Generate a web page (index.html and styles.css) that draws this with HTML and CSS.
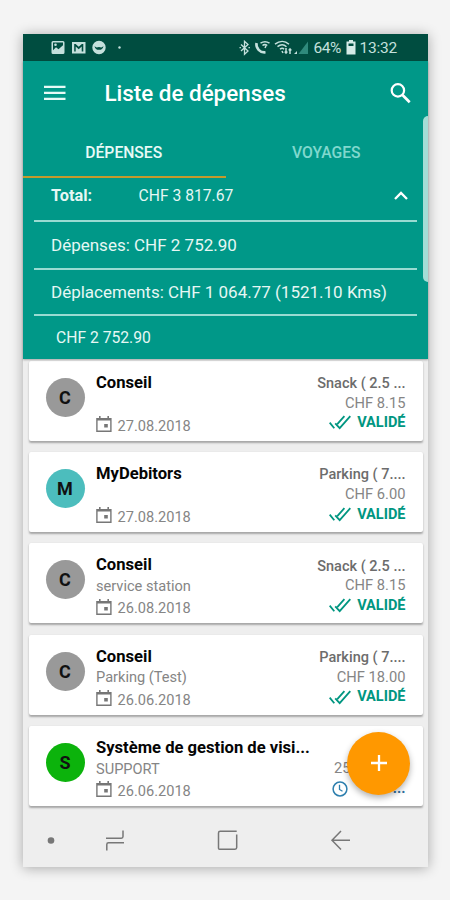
FILE: index.html
```
<!DOCTYPE html>
<html lang="fr">
<head>
<meta charset="utf-8">
<title>Liste de dépenses</title>
<link rel="stylesheet" href="styles.css">
</head>
<body>
<svg class="defs" width="0" height="0" aria-hidden="true">
  <symbol id="cal" viewBox="0 0 16 17"><path fill="none" stroke="currentColor" stroke-width="1.4" d="M.9 2.7h14v12.6H.9z"/><path fill="currentColor" d="M1 2.2h14v2.200H1zM3 0h1.6v3H3zM11.4 0H13v3h-1.600zM8.200 8h3.600v3.600H8.200z"/></symbol>
  <symbol id="checks" viewBox="0 0 22 15"><path fill="none" stroke="currentColor" stroke-width="1.8" d="M.7 7.600l4.600 5.600M6.200 8.300l4.500 4.900L21.300 1.200M8.300 9.200L15.400 1.200"/></symbol>
</svg>
<main class="phone">
  <div class="status">
    <svg class="st-left" width="75" height="16" viewBox="0 0 75 16" fill="#c4e0dc">
      <path fill-rule="evenodd" d="M2 1h10a1.500 1.500 0 0 1 1.500 1.500v10a1.500 1.500 0 0 1-1.500 1.500H2a1.500 1.500 0 0 1-1.500-1.500v-10A1.500 1.500 0 0 1 2 1zm0 1.600v7.600l3-3 2.500 2 4.500-4V2.600z"/><circle cx="4.500" cy="4.800" r="1.300"/>
      <path fill-rule="evenodd" d="M21 2h13.500v11.500H21zM23.200 4v7.500h1.500V6.500l3 2.800 3-2.800v5h1.600V4h-1.400l-3.200 2.700L24.600 4z"/>
      <path fill-rule="evenodd" d="M48 .8a6.700 6.700 0 1 1 0 13.400A6.700 6.700 0 0 1 48 .8zM43.500 6.200a4.600 4.600 0 0 0 9 0l-2.200 1.400-2.300-.6-2.300.6z"/>
      <circle cx="68.500" cy="7.500" r="1.200"/>
    </svg>
    <svg class="st-right" width="74" height="16" viewBox="0 0 74 16" fill="none" stroke="#c4e0dc" stroke-width="1.300">
      <path d="M3 4.500l7 6.500-3.500 3.200V1.300L10 4.500 3 11M1.500 7.700h1.400M10.500 7.700h1.400"/>
      <path stroke-width="2.600" d="M18.500 3c-.8 5 3.500 10 9 9.300"/><path stroke-width="1.500" d="M22.500 3.200c3-2 6-2 9 0M24.500 5.500c1.500-1.200 3-1.200 4.800 0M27 8l1-2"/>
      <path stroke-width="1.500" d="M37 4.200c4.500-3.600 10-3.600 14 0M39.500 6.700c3-2.400 6.300-2.400 9 0M42 9.200c1.500-1.200 3-1.200 4 0M44 11l1 2M48 8v5M46.800 11.500L48 13l1.300-1.500M52 14V9M50.800 10.500L52 9l1.300 1.500"/>
      <path fill="#2f8a7c" stroke="none" d="M70 1.500V14H60.500z"/><path fill="#c4e0dc" stroke="none" d="M59 11v3h-3z"/>
    </svg>
    <span class="st-text pct">64%</span>
    <svg class="batt" width="10" height="15" viewBox="0 0 10 15"><path fill="#d5ebe7" fill-rule="evenodd" d="M3 0h4v1.500h2.500V14.500H.5V1.500H3zM2.500 3.500v2.500h5V3.500z"/></svg>
    <span class="st-text clock">13:32</span>
  </div>
  <header class="head">
    <div class="bar">
      <svg class="menu" width="22" height="16" viewBox="0 0 22 16"><path stroke="#e6faf6" stroke-width="2.300" d="M0 1.800h21.500M0 7.800h21.500M0 13.800h21.500"/></svg>
      <h1 class="title">Liste de dépenses</h1>
      <svg class="search" width="21" height="21" viewBox="0 0 21 21" fill="none" stroke="#fff"><circle cx="7.900" cy="7.400" r="6.200" stroke-width="2.200"/><path stroke-width="2.700" d="M12.500 12l7.200 7.200"/></svg>
    </div>
    <nav class="tabs"><span class="tab on">DÉPENSES</span><span class="tab">VOYAGES</span></nav>
    <div class="row total"><b class="t-label">Total:</b><span class="t-val">CHF 3 817.67</span>
      <svg class="chev" width="14" height="9" viewBox="0 0 14 9"><path fill="none" stroke="#fff" stroke-width="2.300" d="M1 8l6-6 6 6"/></svg></div>
    <div class="row dep"><span class="r-dep">Dépenses: CHF 2 752.90</span></div>
    <div class="row km"><span class="r-km">Déplacements: CHF 1 064.77 (1521.10 Kms)</span></div>
    <div class="row sum"><span class="r-sum">CHF 2 752.90</span></div>
    <div class="edge"></div>
  </header>
  <section class="list">
    <article class="card"><div class="avatar">C</div>
      <div class="info"><div class="name">Conseil</div><div class="sub"></div><div class="date"><svg width="16" height="17"><use href="#cal"/></svg><span>27.08.2018</span></div></div>
      <div class="side"><div class="kind snack">Snack ( 2.5 ...</div><div class="amt">CHF 8.15</div><div class="ok"><svg width="22" height="15"><use href="#checks"/></svg><span>VALIDÉ</span></div></div></article>
    <article class="card"><div class="avatar teal">M</div>
      <div class="info"><div class="name">MyDebitors</div><div class="sub"></div><div class="date"><svg width="16" height="17"><use href="#cal"/></svg><span>27.08.2018</span></div></div>
      <div class="side"><div class="kind park">Parking ( 7....</div><div class="amt">CHF 6.00</div><div class="ok"><svg width="22" height="15"><use href="#checks"/></svg><span>VALIDÉ</span></div></div></article>
    <article class="card"><div class="avatar">C</div>
      <div class="info"><div class="name">Conseil</div><div class="sub">service station</div><div class="date"><svg width="16" height="17"><use href="#cal"/></svg><span>26.08.2018</span></div></div>
      <div class="side"><div class="kind snack">Snack ( 2.5 ...</div><div class="amt">CHF 8.15</div><div class="ok"><svg width="22" height="15"><use href="#checks"/></svg><span>VALIDÉ</span></div></div></article>
    <article class="card"><div class="avatar">C</div>
      <div class="info"><div class="name">Conseil</div><div class="sub">Parking (Test)</div><div class="date"><svg width="16" height="17"><use href="#cal"/></svg><span>26.06.2018</span></div></div>
      <div class="side"><div class="kind park">Parking ( 7....</div><div class="amt">CHF 18.00</div><div class="ok"><svg width="22" height="15"><use href="#checks"/></svg><span>VALIDÉ</span></div></div></article>
    <article class="card"><div class="avatar green">S</div>
      <div class="info"><div class="name">Système de gestion de visi...</div><div class="sub">SUPPORT</div><div class="date"><svg width="16" height="17"><use href="#cal"/></svg><span>26.06.2018</span></div></div>
      <div class="side last"><div class="kind"></div><div class="amt km-amt">25</div><div class="wait"><svg width="16" height="16" viewBox="0 0 16 16" fill="none" stroke="#2d7fae"><circle cx="8" cy="8" r="6.900" stroke-width="1.500"/><path stroke-width="1.300" d="M7.500 3.800v4.700l3 1.800"/></svg><span>...</span></div></div></article>
    <div class="fab"><svg width="16" height="16" viewBox="0 0 16 16"><path stroke="#fff" stroke-width="2.300" d="M8 0v16M0 8h16"/></svg></div>
  </section>
  <footer class="nav">
    <svg width="405" height="60" viewBox="0 0 405 60" fill="none" stroke="#777" stroke-width="1.500">
      <circle cx="28" cy="33.500" r="3.300" fill="#777" stroke="none"/>
      <path d="M83 31.200h15.300q1.700 0 1.700-1.700V23.500M101 35.700H85.500q-1.700 0-1.700 1.700V43.500"/>
      <path d="M213.700 27.500v13q0 1.700-1.700 1.700h-15.500q-1 0-1-1V26q0-1.700 1.700-1.700h16.500"/>
      <path d="M327 33.200h-17M318 24l-9 9.200 9 9.300"/>
    </svg>
  </footer>
</main>
</body>
</html>
```
FILE: styles.css
```
* { box-sizing: border-box; }
body { margin: 0; width: 450px; height: 900px; overflow: hidden; background: #f4f4f4; font-family: Roboto, "Liberation Sans", sans-serif; padding: 34px 0 0 23px; }
.defs { position: absolute; }
svg { display: block; flex: none; }
span, .name, .sub, .kind, .amt, .title { white-space: nowrap; }
.phone { width: 405px; height: 833px; background: #eee; display: flex; flex-direction: column; box-shadow: 0 1px 12px rgba(0,0,0,.32); }
.status { height: 27px; flex: none; background: #004d40; display: flex; align-items: center; padding-left: 28px; }
.st-right { margin-left: 112px; }
.st-text { color: #c4e0dc; font-size: 15.500px; line-height: 20px; padding-top: 1px; }
.pct { width: 28px; margin-left: 1.500px; letter-spacing: -.4px; }
.batt { margin-left: 4px; }
.clock { margin-left: 4px; letter-spacing: -.2px; }
.head { height: 298px; flex: none; background: #009888; color: #fff; position: relative; z-index: 1; box-shadow: 0 1px 2px rgba(0,0,0,.3); }
.bar { height: 64px; display: flex; align-items: center; padding: 0 17px 0 21px; }
.title { margin: 0 auto 0 38.500px; font-size: 22.400px; font-weight: 500; }
.tabs { height: 53px; display: flex; }
.tab { width: 50%; text-align: center; line-height: 55px; font-size: 15.700px; font-weight: 500; color: #80d8ce; padding-right: 1px; }
.tab.on { color: #e8faf7; border-bottom: 2px solid #c49a2c; }
.row { margin: 0 11px; padding-left: 17px; display: flex; align-items: center; font-size: 17px; color: #e6f7f4; border-bottom: 2px solid #99dbd2; }
.total { height: 44px; font-size: 15.700px; padding-bottom: 8px; }
.t-label { width: 87.500px; font-weight: 700; font-size: 16.300px; }
.chev { margin: 0 9px 0 auto; }
.dep { height: 47.500px; padding-top: 1px; }
.km { height: 46px; }
.sum { height: 44px; border: 0; padding-left: 22px; font-size: 15.700px; }
.edge { position: absolute; right: 0; top: 55px; width: 5px; height: 166px; background: #a4ddd6; border-radius: 5px 0 0 5px; }
.list { height: 448px; flex: none; position: relative; padding: 1.500px 5.500px 0; display: flex; flex-direction: column; gap: 11.400px; }
.card { height: 80px; flex: none; background: #fff; border-radius: 2px; display: flex; padding: 0 17px; box-shadow: 0 1.500px 2px rgba(0,0,0,.3); }
.avatar { width: 39px; height: 39px; margin-top: 17px; border-radius: 50%; background: #999; display: grid; place-items: center; font-size: 18px; font-weight: 700; color: #111; }
.teal { background: #4cbdbd; }
.green { background: #0cb30c; }
.info { margin-left: 11.500px; padding-top: 11px; flex: 1; width: 0; color: #858585; font-size: 14.600px; line-height: 21.500px; }
.name { color: #050505; font-size: 16.600px; font-weight: 700; }
.sub { height: 21.500px; font-size: 14.600px; }
.date { display: flex; align-items: center; gap: 5.500px; color: #777; padding-top: 1px; }
.date svg { margin-top: -4px; }
.date span { color: #858585; }
.side { padding-top: 13.500px; text-align: right; font-size: 14.700px; line-height: 19.600px; color: #858585; }
.kind { font-size: 14.500px; font-weight: 500; color: #6c6c6c; height: 19.600px; }
.ok { display: flex; justify-content: flex-end; align-items: center; gap: 6.500px; color: #009681; font-weight: 700; font-size: 14.500px; }
.last { width: 73.500px; }
.km-amt { text-align: left; padding-left: 2px; }
.wait { display: flex; justify-content: space-between; align-items: center; color: #2d6f9e; font-weight: 700; }
.fab { position: absolute; left: 324px; top: 372.500px; width: 63px; height: 63px; border-radius: 50%; background: #ff9800; display: grid; place-items: center; box-shadow: 0 3px 6px rgba(0,0,0,.3); }
.nav { height: 60px; flex: none; }
```
